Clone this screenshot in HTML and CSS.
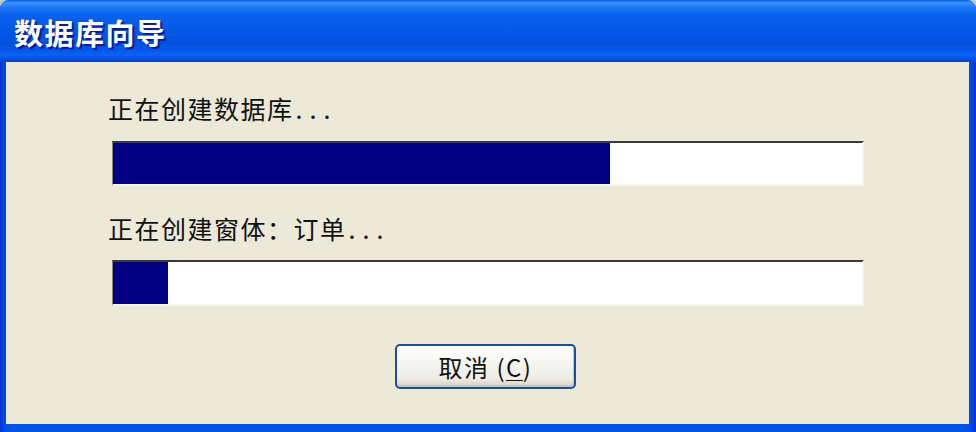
FILE: index.html
```html
<!DOCTYPE html>
<html lang="zh-CN">
<head>
<meta charset="utf-8">
<title>数据库向导</title>
<link rel="stylesheet" href="styles.css">
</head>
<body>
<div class="window">
  <div class="titlebar"><span class="title">数据库向导</span></div>
  <div class="client">
    <div class="label">正在创建数据库<span class="dots">...</span></div>
    <div class="progress"><div class="fill" style="width:66.3%"></div></div>
    <div class="label label2">正在创建窗体：订单<span class="dots">...</span></div>
    <div class="progress progress2"><div class="fill" style="width:7.4%"></div></div>
    <div class="actions">
      <button class="btn">取消 (<u>C</u>)</button>
    </div>
  </div>
</div>
</body>
</html>
```
FILE: styles.css
```css
html, body {
  margin: 0;
  padding: 0;
  background: #c9c8c4;
}
.window {
  width: 976px;
  height: 432px;
  display: flex;
  flex-direction: column;
  background: linear-gradient(to right, #0831d9 0, #0055e5 6px, #0055e5 968px, #0831d9 976px);
  border-radius: 9px 9px 0 0;
  overflow: hidden;
  box-sizing: border-box;
}
.titlebar {
  height: 62px;
  flex: none;
  display: flex;
  align-items: center;
  padding-left: 14px;
  box-sizing: border-box;
  background: linear-gradient(to bottom,
    #0a5fe4 0px, #3d95ff 3px, #1f78f7 7px, #0a62ee 14px, #0458e6 30px,
    #0451e0 44px, #0557ea 50px, #0a62f3 55px, #0550e0 59px, #0343c7 62px);
}
.title {
  font-family: "Noto Sans CJK SC", "Noto Sans", sans-serif;
  font-weight: 700;
  font-size: 29px;
  line-height: 1;
  color: #fff;
  letter-spacing: 1.5px;
  text-shadow: 2px 2px 1px #0a1e8a;
  margin-top: 3px;
}
.client {
  flex: 1;
  margin: 0 7px 8px 6px;
  background: #ece9d8;
  padding: 31px 0 0 102px;
  box-sizing: border-box;
  display: flex;
  flex-direction: column;
  align-items: flex-start;
}
.label {
  font-family: "Noto Sans CJK SC", "Noto Sans", sans-serif;
  font-size: 25px;
  font-weight: 400;
  line-height: 30px;
  color: #111;
  letter-spacing: 1.5px;
}
.dots {
  letter-spacing: 7px;
  margin-left: 2px;
}
.label2 {
  margin-top: 27px;
}
.progress {
  margin-top: 18px;
  margin-left: 4px;
  width: 752px;
  height: 45px;
  box-sizing: border-box;
  background: #fff;
  border-top: 2px solid #3a3a36;
  border-left: 1px solid #8a877c;
  border-right: 2px solid #f4f3ee;
  border-bottom: 2px solid #f4f3ee;
  display: flex;
}
.progress2 {
  margin-top: 17px;
  height: 46px;
}
.fill {
  height: 100%;
  background: #000080;
}
.actions {
  align-self: stretch;
  margin-left: -102px;
  margin-top: 38px;
  display: flex;
  justify-content: center;
  padding-right: 4px;
}
.btn {
  width: 181px;
  height: 45px;
  border: 2px solid #1c4f98;
  border-radius: 5px;
  background: linear-gradient(to bottom, #ffffff 0%, #f6f6f3 40%, #ecebe5 80%, #d6d0c5 100%);
  box-shadow: inset -1px -2px 0 #c9c5b5;
  font-family: "Noto Sans CJK SC", "Noto Sans", sans-serif;
  font-size: 24px;
  font-weight: 400;
  color: #111;
  padding: 0;
  letter-spacing: 1.5px;
}
.btn u {
  text-decoration-thickness: 1px;
  text-underline-offset: 3px;
}
```
